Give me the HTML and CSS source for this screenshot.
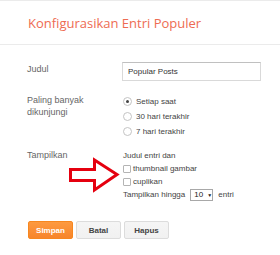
FILE: index.html
```html
<!DOCTYPE html>
<html lang="id">
<head>
    <meta charset="UTF-8">
    <title>Konfigurasikan Entri Populer</title>
    <link rel="stylesheet" href="styles.css">
</head>
<body>

<div class="header">
    <h1>Konfigurasikan Entri Populer</h1>
</div>

<div class="form">
    <div class="row row-title">
        <div class="label">Judul</div>
        <div class="field">
            <input type="text" class="text-input" value="Popular Posts">
        </div>
    </div>

    <div class="row row-period">
        <div class="label">Paling banyak<br>dikunjungi</div>
        <div class="field">
            <label class="option"><input type="radio" name="period" checked> Setiap saat</label>
            <label class="option"><input type="radio" name="period"> 30 hari terakhir</label>
            <label class="option"><input type="radio" name="period"> 7 hari terakhir</label>
        </div>
    </div>

    <div class="row row-show">
        <div class="label">Tampilkan</div>
        <div class="field">
            <div class="line">Judul entri dan</div>
            <label class="line check"><input type="checkbox"> thumbnail gambar</label>
            <label class="line check"><input type="checkbox"> cuplikan</label>
            <div class="line">Tampilkan hingga <span class="select">10 <span class="caret">&#9660;</span></span> entri</div>
        </div>
    </div>

    <div class="buttons">
        <button class="btn btn-save">Simpan</button>
        <button class="btn">Batal</button>
        <button class="btn">Hapus</button>
    </div>
</div>

<svg class="arrow" width="56" height="42" viewBox="0 0 56 42">
    <polygon points="4.5,15.5 28.5,15.5 28.5,6 51,20.5 28.5,36 28.5,26.5 4.5,26.5" fill="#fff" stroke="#e5000f" stroke-width="3" stroke-linejoin="miter"/>
</svg>

</body>
</html>
```

FILE: styles.css
```css
body {
    margin: 0;
    font-family: Arial, "Liberation Sans", sans-serif;
    background-color: white;
    position: relative;
}
.header {
    border-top: 1px solid #ebebeb;
    border-bottom: 1px solid #ebebeb;
    height: 43px;
    padding-left: 28px;
    display: flex;
    align-items: center;
}
h1 {
    margin: 0;
    font-family: "Open Sans", sans-serif;
    font-weight: normal;
    font-size: 13px;
    color: #ee6b52;
}
.form {
    padding: 17px 19px 0 27px;
}
.row {
    display: flex;
}
.label {
    width: 95px;
    font-size: 9px;
    line-height: 12px;
    color: #666;
}
.field {
    font-size: 8px;
    color: #444;
}
.row-title .label {
    padding-top: 1px;
}
.text-input {
    box-sizing: border-box;
    width: 139px;
    height: 19px;
    margin: 0;
    padding: 0 5px;
    border: 1px solid #d9d9d9;
    border-top-color: #c0c0c0;
    font-family: Arial, "Liberation Sans", sans-serif;
    font-size: 8px;
    color: #333;
}
.row-period {
    margin-top: 13px;
}
.option {
    display: flex;
    align-items: center;
    height: 15px;
    margin-left: 1px;
}
.option input {
    appearance: none;
    width: 9px;
    height: 9px;
    margin: 0 4px 0 0;
    border: 1px solid #c4c4c4;
    border-radius: 50%;
    background: #fff;
    position: relative;
}
.option input:checked::after {
    content: "";
    position: absolute;
    left: 2px;
    top: 2px;
    width: 3px;
    height: 3px;
    border-radius: 50%;
    background: #444;
}
.row-show {
    margin-top: 10px;
}
.row-show .label {
    line-height: 13px;
}
.line {
    display: flex;
    align-items: center;
    height: 13px;
    margin-left: 1px;
}
.check input {
    appearance: none;
    width: 8px;
    height: 8px;
    margin: 0 2px 0 0;
    border: 1px solid #b4b4b4;
    border-radius: 1px;
    background: #fff;
}
.select {
    display: inline-flex;
    align-items: center;
    box-sizing: border-box;
    height: 12px;
    width: 23px;
    margin: 0 5px 0 5px;
    padding-left: 3px;
    border: 1px solid #a8a8a8;
    color: #222;
}
.caret {
    font-size: 5px;
    margin-left: 4px;
}
.buttons {
    display: flex;
    gap: 3px;
    margin-top: 20px;
    margin-left: 1px;
}
.btn {
    box-sizing: border-box;
    width: 45px;
    height: 18px;
    margin: 0;
    padding: 0;
    border: 1px solid #dcdcdc;
    border-radius: 2px;
    background: linear-gradient(#f5f5f5, #f1f1f1);
    font-family: Arial, "Liberation Sans", sans-serif;
    font-size: 8px;
    font-weight: bold;
    color: #444;
}
.btn-save {
    border-color: #f7871f;
    background: linear-gradient(#fd9a40, #f7852b);
    color: #fff;
}
.arrow {
    position: absolute;
    left: 66px;
    top: 154px;
}
```
